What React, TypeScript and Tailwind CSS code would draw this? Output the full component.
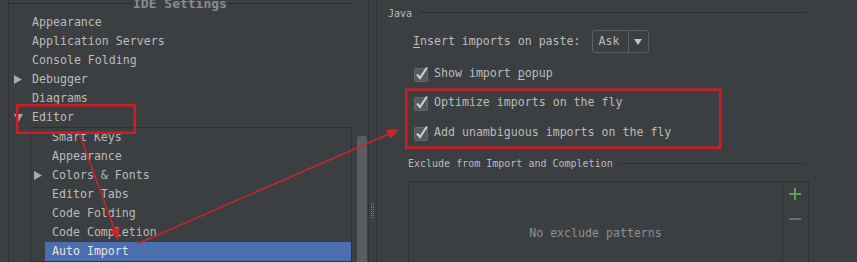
import React from "react";

const topItems = ["Appearance", "Application Servers", "Console Folding", "Debugger", "Diagrams", "Editor"];
const editorItems = ["Smart Keys", "Appearance", "Colors & Fonts", "Editor Tabs", "Code Folding", "Code Completion", "Auto Import"];

function Tri({ down }: { down?: boolean }) {
    if (down) {
        return (
            <svg width="9" height="8" viewBox="0 0 9 8">
                <path d="M0 0 H9 L4.5 8 Z" fill="#a8aaac" />
            </svg>
        );
    }
    return (
        <svg width="8" height="9" viewBox="0 0 8 9">
            <path d="M0 0 L8 4.5 L0 9 Z" fill="#a8aaac" />
        </svg>
    );
}

function Check() {
    return (
        <svg width="15" height="16" viewBox="0 0 15 16" className="shrink-0">
            <rect x="0.5" y="2.5" width="13" height="13" rx="1" fill="#56595b" stroke="#66696b" />
            <path d="M3 8.5 L6 12 L13 1.5" fill="none" stroke="#d2d2d2" strokeWidth="2" />
        </svg>
    );
}

function CheckRow({ className, children }: { className: string; children: React.ReactNode }) {
    return (
        <div className={"flex h-[20px] items-center gap-[5px] pl-[37px] " + className}>
            <Check />
            <span className="whitespace-nowrap">{children}</span>
        </div>
    );
}

export default function App() {
    return (
        <div className="relative flex h-[262px] w-[857px] overflow-hidden bg-[#3c3f41] font-['DejaVu_Sans_Mono',monospace] text-[11.6px] text-[#bbbbbb]">
            {/* settings tree */}
            <div className="w-[368px] shrink-0 pl-2">
                <div className="flex h-full flex-col border-l border-[#313335]">
                    <div className="flex h-[6px] shrink-0 items-center">
                        <div className="h-px w-[124px] bg-[#2c2e30]" />
                        <span className="whitespace-nowrap text-[13px] font-bold leading-[13px] text-[#8a8c8e]">IDE Settings</span>
                        <div className="h-px w-[125px] bg-[#2c2e30]" />
                    </div>
                    <div className="flex flex-1">
                        <div className="w-[348px] pt-[7px]">
                            {topItems.map((item) => (
                                <div key={item} className="flex h-[19px] items-center">
                                    <div className="flex w-[23px] pl-[5px]">
                                        {item === "Debugger" && <Tri />}
                                        {item === "Editor" && <Tri down />}
                                    </div>
                                    <span className="whitespace-nowrap">{item}</span>
                                </div>
                            ))}
                            <div className="ml-[21px] w-[322px] border border-[#2f3133]">
                                {editorItems.map((item) => (
                                    <div key={item} className="flex h-[19px]">
                                        <div className="flex w-[14px] items-center pl-[3px]">
                                            {item === "Colors & Fonts" && <Tri />}
                                        </div>
                                        <div
                                            className={
                                                item === "Auto Import"
                                                    ? "flex flex-1 items-center bg-[#4b6eaf] pl-[7px] text-[#e4e4e4]"
                                                    : "flex flex-1 items-center pl-[7px]"
                                            }
                                        >
                                            <span className="whitespace-nowrap">{item}</span>
                                        </div>
                                    </div>
                                ))}
                            </div>
                        </div>
                        <div className="flex w-[10px] flex-col pt-[130px]">
                            <div className="flex-1 rounded-t-[3px] bg-[#5a5d5f]" />
                        </div>
                    </div>
                </div>
            </div>

            {/* splitter */}
            <div className="flex w-[9px] shrink-0 justify-center border-x border-[#313335] pt-[203px]">
                <div className="h-[15px] w-[3px] border-x border-dotted border-[#7d7f81]" />
            </div>

            {/* auto import page */}
            <div className="flex-1 overflow-hidden pt-[7px]">
                <div className="flex h-[14px] items-center pl-[11px] pr-[51px]">
                    <span className="text-[10px] leading-none">Java</span>
                    <div className="mb-[4px] ml-2 h-px flex-1 bg-[#2c2e30]" />
                </div>

                <div className="mt-[9px] flex h-[23px] items-center pl-[36px]">
                    <span className="whitespace-nowrap">
                        <span className="underline underline-offset-2">I</span>nsert imports on paste:
                    </span>
                    <div className="ml-[11px] flex h-[23px] w-[57px] rounded-[3px] border border-[#5e6062]">
                        <span className="flex w-[35px] items-center pl-[6px]">Ask</span>
                        <span className="flex flex-1 items-center justify-center border-l border-[#5e6062]">
                            <svg width="8" height="6" viewBox="0 0 8 6">
                                <path d="M0 0 H8 L4 6 Z" fill="#c4c4c4" />
                            </svg>
                        </span>
                    </div>
                </div>

                <CheckRow className="mt-[11px]">
                    Show import <span className="underline underline-offset-2">p</span>opup
                </CheckRow>
                <CheckRow className="mt-[9px]">Optimize imports on the fly</CheckRow>
                <CheckRow className="mt-[10px]">Add unambiguous imports on the fly</CheckRow>

                <div className="mt-[14px] flex h-[14px] items-center pl-[31px] pr-[52px]">
                    <span className="whitespace-nowrap text-[10px] leading-none">Exclude from Import and Completion</span>
                    <div className="mb-[2px] ml-[6px] h-px flex-1 bg-[#2c2e30]" />
                </div>

                <div className="ml-[31px] mt-[10px] flex h-[110px] w-[401px] border border-[#2f3133]">
                    <div className="flex h-[104px] flex-1 items-center justify-center text-[#8d8f91]">No exclude patterns</div>
                    <div className="flex w-[26px] flex-col items-center border-l border-[#2f3133] pr-[1px] pt-[6px]">
                        <svg width="12" height="12" viewBox="0 0 12 12">
                            <path d="M5 0 H7 V5 H12 V7 H7 V12 H5 V7 H0 V5 H5 Z" fill="#4fa352" />
                        </svg>
                        <svg width="12" height="2" viewBox="0 0 12 2" className="mt-[18px]">
                            <rect width="12" height="2" fill="#6a6c6e" />
                        </svg>
                    </div>
                </div>
            </div>

            {/* red annotations */}
            <svg className="pointer-events-none absolute inset-0" width="857" height="262" viewBox="0 0 857 262">
                <defs>
                    <marker id="ah" markerWidth="12" markerHeight="10" refX="11" refY="5" orient="auto" markerUnits="userSpaceOnUse">
                        <path d="M0 0 L12 5 L0 10 Z" fill="#d0222a" />
                    </marker>
                </defs>
                <rect x="17.25" y="105.25" width="117.5" height="27.5" fill="none" stroke="#cf1d25" strokeWidth="2.5" />
                <rect x="406.25" y="89.75" width="314" height="58" fill="none" stroke="#cf1d25" strokeWidth="2.5" />
                <line x1="79" y1="133" x2="118" y2="239" stroke="#c8262c" strokeWidth="1.5" markerEnd="url(#ah)" />
                <line x1="137" y1="244" x2="398" y2="130" stroke="#c8262c" strokeWidth="1.5" markerEnd="url(#ah)" />
            </svg>
        </div>
    );
}
